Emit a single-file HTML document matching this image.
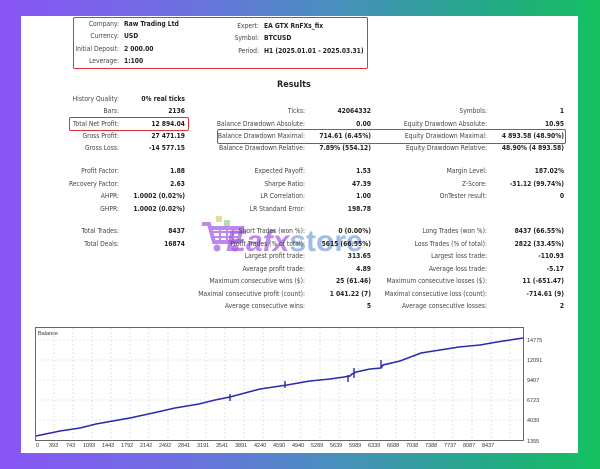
<!DOCTYPE html>
<html><head><meta charset="utf-8"><style>
*{margin:0;padding:0;box-sizing:border-box}
body{width:600px;height:469px;overflow:hidden;position:relative;font-family:"DejaVu Sans Condensed","Liberation Sans",sans-serif;font-size:6.7px;color:#333;
background:linear-gradient(90deg,#8a55f7 0%,#6d6fe0 30%,#4a8fc0 55%,#25a88a 80%,#14c060 100%)}
.card{position:absolute;left:21px;top:16px;width:557px;height:437px;background:#fff}
.t{position:absolute;white-space:nowrap;line-height:10px}
.l{color:#444}
.v{font-weight:bold;color:#222}
.box{position:absolute;border:1.5px solid #e0303a;border-radius:2px}
</style></head><body>
<div class="card"></div>

<!-- watermark -->
<svg style="position:absolute;left:200px;top:214px;opacity:.75" width="45" height="40" viewBox="0 0 45 40">
<rect x="16" y="2" width="6" height="6" fill="#e8d070"/><rect x="24" y="6" width="6" height="6" fill="#9fd0a0"/>
<path d="M2 10 L9 10 L14 28 L38 28 L42 14 L11 14" fill="none" stroke="#a860e8" stroke-width="4"/>
<path d="M13 18 H40 M14 23 H38 M20 14 V28 M27 14 V28 M33 14 V28" stroke="#a860e8" stroke-width="2"/>
<circle cx="17" cy="34" r="3.5" fill="#a860e8"/><circle cx="35" cy="34" r="3.5" fill="#a860e8"/>
</svg>
<div class="t" style="left:226px;top:226px;font:italic bold 30px 'Liberation Sans',sans-serif;line-height:32px;opacity:.75"><span style="color:#a860e8">Eafx</span><span style="color:#7fa8e0;font-style:normal">store</span></div>

<div class="box" style="left:73px;top:17px;width:295px;height:52px"></div>
<div class="box" style="left:69px;top:117px;width:120px;height:14px"></div>
<div class="box" style="left:217px;top:129px;width:349px;height:15px"></div>

<!-- header -->
<div class="t l" style="right:481px;top:19px">Company:</div><div class="t v" style="left:124px;top:19px">Raw Trading Ltd</div>
<div class="t l" style="right:481px;top:31px">Currency:</div><div class="t v" style="left:124px;top:31px">USD</div>
<div class="t l" style="right:481px;top:44px">Initial Deposit:</div><div class="t v" style="left:124px;top:44px">2 000.00</div>
<div class="t l" style="right:481px;top:56px">Leverage:</div><div class="t v" style="left:124px;top:56px">1:100</div>
<div class="t l" style="right:341px;top:21px">Expert:</div><div class="t v" style="left:264px;top:21px">EA GTX RnFXs_fix</div>
<div class="t l" style="right:341px;top:33px">Symbol:</div><div class="t v" style="left:264px;top:33px">BTCUSD</div>
<div class="t l" style="right:341px;top:46px">Period:</div><div class="t v" style="left:264px;top:46px">H1 (2025.01.01 - 2025.03.31)</div>

<div class="t v" style="left:277px;top:80px;font-size:9px">Results</div>

<!-- col1 -->
<div class="t l" style="right:481px;top:94px">History Quality:</div><div class="t v" style="right:415px;top:94px">0% real ticks</div>
<div class="t l" style="right:481px;top:106px">Bars:</div><div class="t v" style="right:415px;top:106px">2136</div>
<div class="t l" style="right:481px;top:119px">Total Net Profit:</div><div class="t v" style="right:415px;top:119px">12 894.04</div>
<div class="t l" style="right:481px;top:131px">Gross Profit:</div><div class="t v" style="right:415px;top:131px">27 471.19</div>
<div class="t l" style="right:481px;top:143px">Gross Loss:</div><div class="t v" style="right:415px;top:143px">-14 577.15</div>
<div class="t l" style="right:481px;top:166px">Profit Factor:</div><div class="t v" style="right:415px;top:166px">1.88</div>
<div class="t l" style="right:481px;top:179px">Recovery Factor:</div><div class="t v" style="right:415px;top:179px">2.63</div>
<div class="t l" style="right:481px;top:191px">AHPR:</div><div class="t v" style="right:415px;top:191px">1.0002 (0.02%)</div>
<div class="t l" style="right:481px;top:204px">GHPR:</div><div class="t v" style="right:415px;top:204px">1.0002 (0.02%)</div>
<div class="t l" style="right:481px;top:226px">Total Trades:</div><div class="t v" style="right:415px;top:226px">8437</div>
<div class="t l" style="right:481px;top:239px">Total Deals:</div><div class="t v" style="right:415px;top:239px">16874</div>

<!-- col2 -->
<div class="t l" style="right:295px;top:106px">Ticks:</div><div class="t v" style="right:229px;top:106px">42064332</div>
<div class="t l" style="right:295px;top:119px">Balance Drawdown Absolute:</div><div class="t v" style="right:229px;top:119px">0.00</div>
<div class="t l" style="right:295px;top:131px">Balance Drawdown Maximal:</div><div class="t v" style="right:229px;top:131px">714.61 (6.45%)</div>
<div class="t l" style="right:295px;top:143px">Balance Drawdown Relative:</div><div class="t v" style="right:229px;top:143px">7.89% (554.12)</div>
<div class="t l" style="right:295px;top:166px">Expected Payoff:</div><div class="t v" style="right:229px;top:166px">1.53</div>
<div class="t l" style="right:295px;top:179px">Sharpe Ratio:</div><div class="t v" style="right:229px;top:179px">47.39</div>
<div class="t l" style="right:295px;top:191px">LR Correlation:</div><div class="t v" style="right:229px;top:191px">1.00</div>
<div class="t l" style="right:295px;top:204px">LR Standard Error:</div><div class="t v" style="right:229px;top:204px">198.78</div>
<div class="t l" style="right:295px;top:226px">Short Trades (won %):</div><div class="t v" style="right:229px;top:226px">0 (0.00%)</div>
<div class="t l" style="right:295px;top:239px">Profit Trades (% of total):</div><div class="t v" style="right:229px;top:239px">5615 (66.55%)</div>
<div class="t l" style="right:295px;top:251px">Largest profit trade:</div><div class="t v" style="right:229px;top:251px">313.65</div>
<div class="t l" style="right:295px;top:264px">Average profit trade:</div><div class="t v" style="right:229px;top:264px">4.89</div>
<div class="t l" style="right:295px;top:276px">Maximum consecutive wins ($):</div><div class="t v" style="right:229px;top:276px">25 (61.46)</div>
<div class="t l" style="right:295px;top:289px">Maximal consecutive profit (count):</div><div class="t v" style="right:229px;top:289px">1 041.22 (7)</div>
<div class="t l" style="right:295px;top:301px">Average consecutive wins:</div><div class="t v" style="right:229px;top:301px">5</div>

<!-- col3 -->
<div class="t l" style="right:113px;top:106px">Symbols:</div><div class="t v" style="right:36px;top:106px">1</div>
<div class="t l" style="right:113px;top:119px">Equity Drawdown Absolute:</div><div class="t v" style="right:36px;top:119px">10.95</div>
<div class="t l" style="right:113px;top:131px">Equity Drawdown Maximal:</div><div class="t v" style="right:36px;top:131px">4 893.58 (48.90%)</div>
<div class="t l" style="right:113px;top:143px">Equity Drawdown Relative:</div><div class="t v" style="right:36px;top:143px">48.90% (4 893.58)</div>
<div class="t l" style="right:113px;top:166px">Margin Level:</div><div class="t v" style="right:36px;top:166px">187.02%</div>
<div class="t l" style="right:113px;top:179px">Z-Score:</div><div class="t v" style="right:36px;top:179px">-31.12 (99.74%)</div>
<div class="t l" style="right:113px;top:191px">OnTester result:</div><div class="t v" style="right:36px;top:191px">0</div>
<div class="t l" style="right:113px;top:226px">Long Trades (won %):</div><div class="t v" style="right:36px;top:226px">8437 (66.55%)</div>
<div class="t l" style="right:113px;top:239px">Loss Trades (% of total):</div><div class="t v" style="right:36px;top:239px">2822 (33.45%)</div>
<div class="t l" style="right:113px;top:251px">Largest loss trade:</div><div class="t v" style="right:36px;top:251px">-110.93</div>
<div class="t l" style="right:113px;top:264px">Average loss trade:</div><div class="t v" style="right:36px;top:264px">-5.17</div>
<div class="t l" style="right:113px;top:276px">Maximum consecutive losses ($):</div><div class="t v" style="right:36px;top:276px">11 (-651.47)</div>
<div class="t l" style="right:113px;top:289px">Maximal consecutive loss (count):</div><div class="t v" style="right:36px;top:289px">-714.61 (9)</div>
<div class="t l" style="right:113px;top:301px">Average consecutive losses:</div><div class="t v" style="right:36px;top:301px">2</div>

<!-- chart -->
<svg style="position:absolute;left:0;top:0" width="600" height="469">
<rect x="35.5" y="327.5" width="488" height="113" fill="#fff" stroke="#666"/>
<g stroke="#ccc" stroke-dasharray="2,2" stroke-width=".6">
<path d="M35 340H523M35 360H523M35 380H523M35 400H523M35 420H523"/>
<path d="M54 328V440M73 328V440M92 328V440M111 328V440M130 328V440M149 328V440M168 328V440M187 328V440M206 328V440M225 328V440M244 328V440M263 328V440M282 328V440M301 328V440M320 328V440M339 328V440M358 328V440M377 328V440M396 328V440M415 328V440M434 328V440M453 328V440M472 328V440M491 328V440M510 328V440"/>
</g>
<polyline fill="none" stroke="#2a2ab0" stroke-width="1.6" points="36,436 60,431 80,428 96,424 130,418 153,413 175,408 199,404 215,400 230,397 245,393 260,389 287,385 310,381 330,379 344,377 350,376 352,374 356,372 370,369 381,368 383,365 400,361 421,353 440,350 459,347 480,345 497,342 510,340 523,338"/>
<path d="M230 394V401M285 381V388M348 375V382M354 368V378M381 360V368" stroke="#2a2ab0" stroke-width="1.4"/>
<g font-family="Liberation Sans,sans-serif" font-size="5.5" fill="#333">
<text x="38" y="335">Balance</text>
<text x="527" y="342">14775</text><text x="527" y="362">12091</text><text x="527" y="382">9407</text><text x="527" y="402">6723</text><text x="527" y="422">4039</text><text x="527" y="443">1355</text>
<text y="447" x="36">0</text><text y="447" x="49">393</text><text y="447" x="66">743</text><text y="447" x="83">1093</text><text y="447" x="102">1443</text><text y="447" x="121">1792</text><text y="447" x="140">2142</text><text y="447" x="159">2492</text><text y="447" x="178">2841</text><text y="447" x="197">3191</text><text y="447" x="216">3541</text><text y="447" x="235">3891</text><text y="447" x="254">4240</text><text y="447" x="273">4590</text><text y="447" x="292">4940</text><text y="447" x="311">5289</text><text y="447" x="330">5639</text><text y="447" x="349">5989</text><text y="447" x="368">6339</text><text y="447" x="387">6688</text><text y="447" x="406">7038</text><text y="447" x="425">7388</text><text y="447" x="444">7737</text><text y="447" x="463">8087</text><text y="447" x="482">8437</text>
</g>
</svg>
</body></html>
